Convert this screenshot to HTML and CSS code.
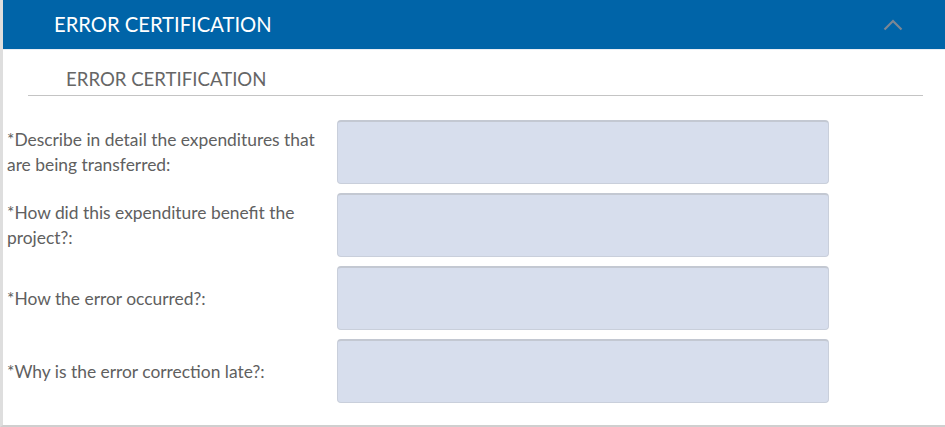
FILE: index.html
```html
<!DOCTYPE html>
<html>
<head>
<meta charset="utf-8">
<link rel="stylesheet" href="styles.css">
</head>
<body>
<div class="panel">
  <div class="panel-header">
    <span class="panel-title">ERROR CERTIFICATION</span>
    <svg class="chevron" width="20" height="12" viewBox="0 0 20 12"><path d="M1.5 10.5 L10 2 L18.5 10.5" fill="none" stroke="#7b8794" stroke-width="2.2"/></svg>
  </div>
  <div class="panel-body">
    <div class="section-head">ERROR CERTIFICATION</div>
    <div class="rows">
      <div class="row">
        <label class="label">*Describe in detail the expenditures that are being transferred:</label>
        <div class="field"></div>
      </div>
      <div class="row">
        <label class="label">*How did this expenditure benefit the project?:</label>
        <div class="field"></div>
      </div>
      <div class="row">
        <label class="label">*How the error occurred?:</label>
        <div class="field"></div>
      </div>
      <div class="row">
        <label class="label">*Why is the error correction late?:</label>
        <div class="field"></div>
      </div>
    </div>
  </div>
</div>
</body>
</html>
```
FILE: styles.css
```css
html, body {
  margin: 0;
  padding: 0;
  background: #fff;
}
body {
  font-family: Lato, "Open Sans", sans-serif;
}
.panel {
  width: 945px;
  height: 427px;
  box-sizing: border-box;
  border-left: 3px solid #dedede;
  border-bottom: 2px solid #cfcfcf;
  background: #fff;
}
.panel-header {
  height: 49px;
  background: #0064a8;
  border-bottom: 1px solid #e8eef5;
  display: flex;
  align-items: center;
  padding-left: 51px;
  padding-right: 42px;
  justify-content: space-between;
}
.panel-title {
  color: #fff;
  font-size: 20.2px;
  margin-top: -1px;
}
.chevron {
  display: block;
  margin-top: 1px;
}
.panel-body {
  padding: 0 22px 0 4px;
}
.section-head {
  margin-left: 21px;
  padding: 17px 0 0 38px;
  height: 28px;
  border-bottom: 1px solid #c4c4c4;
  color: #666;
  font-size: 18.6px;
  line-height: 25px;
  box-sizing: content-box;
}
.rows {
  display: flex;
  flex-direction: column;
  gap: 9px;
  margin-top: 24px;
}
.row {
  display: flex;
  align-items: center;
  height: 64px;
}
.label {
  width: 330px;
  color: #606060;
  font-size: 17.4px;
  line-height: 25px;
  padding-right: 10px;
  box-sizing: border-box;
}
.field {
  width: 492px;
  height: 64px;
  box-sizing: border-box;
  background: #d7deed;
  border: 1px solid #c9cfdb;
  border-top: 2px solid #c3c8d2;
  border-radius: 4px;
}
```
